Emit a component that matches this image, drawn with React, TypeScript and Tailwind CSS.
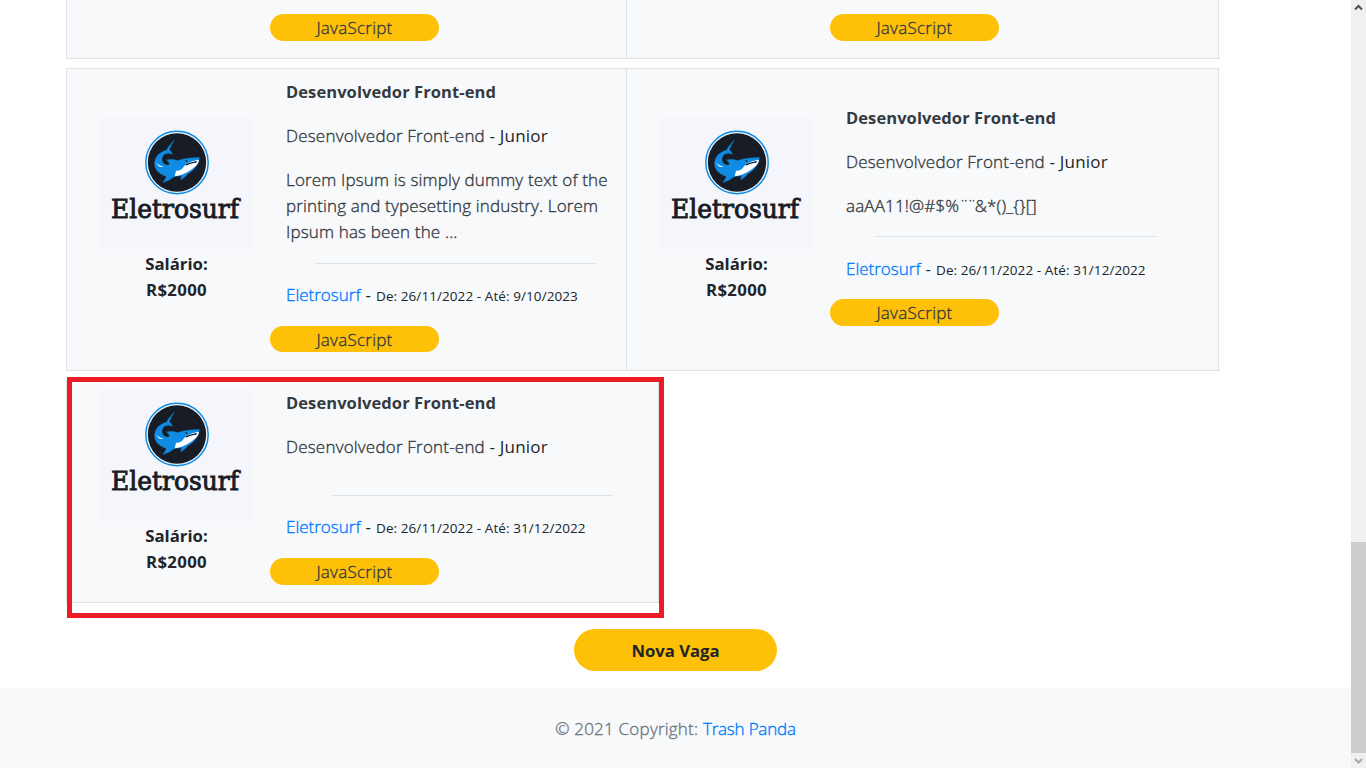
import React from "react";

function Logo() {
  return (
    <svg width="153" height="131" viewBox="0 0 153 131" className="block shrink-0 rounded bg-[#f5f6fc]" role="img" aria-label="Eletrosurf">
      <circle cx="77" cy="44.5" r="31.2" fill="#f5f6fc" stroke="#0e8ce4" strokeWidth="1.5" />
      <circle cx="77" cy="44.5" r="29.2" fill="#181c24" />
      <g transform="translate(43.7 11.7) scale(0.33333)">
        <path d="M91 32C84 42 72 52 70 61C50 66 36 78 33 98C31 118 45 133 68 140C67 147 62 153 57 158C70 154 82 149 93 140L113 138L112 150C120 146 127 138 131 133C150 122 164 108 167 84C145 83 122 86 101 93C90 88 78 89 69 91C74 95 77 99 78 105C64 110 52 98 55 84C58 74 70 66 86 74C84 68 80 64 77 60C79 50 86 42 91 32Z" fill="#0e8ce4" stroke="#0e8ce4" strokeWidth="1.5" />
        <path d="M93 140L97 123C105 124 112 121 117 115C124 104 142 93 166 90C165 97 162 104 155 110C140 125 118 137 93 140ZM36 97Q44 109 60 110Q46 117 36 97Z" fill="#fff" />
        <path d="M127 104Q143 96 160 94L158 99Q145 99 127 108ZM124 91l9 3-6 3z" fill="#181c24" />
      </g>
      <text x="11" y="100" fontFamily="DejaVu Serif" fontWeight="400" fontSize="26" fill="#181c24" stroke="#181c24" strokeWidth="0.9" textLength="128" lengthAdjust="spacingAndGlyphs">Eletrosurf</text>
    </svg>
  );
}

function Badge() {
  return (
    <span className="block h-[26.4px] w-[169px] rounded-full bg-[#ffc107] text-center font-light leading-[27px] tracking-[0.25px] text-[#343a40] [-webkit-text-stroke:0.35px]">
      JavaScript
    </span>
  );
}

type JobProps = { description?: React.ReactNode[]; until: string; className: string; rule: string };

function Job({ description = [], until, className, rule }: JobProps) {
  return (
    <article className={"flex items-center border-[#dee2e6] bg-[#f8f9fb] " + className}>
      <div className="mb-[19px] ml-[33px] flex w-[153px] shrink-0 flex-col items-center text-[16.8px] font-bold">
        <Logo />
        <p className="-mb-[0.6px] mt-[2.1px] text-center leading-[26px]">
          Salário:
          <br />
          <span className="tracking-[0.3px]">R$2000</span>
        </p>
      </div>
      <div className="ml-[17px] pb-[9px]">
        <div className="pl-4 pt-[0.6px]">
          <h2 className="mb-[17.6px] text-[16.5px] font-bold tracking-[0.08px] text-[#343a40]">Desenvolvedor Front-end</h2>
          <p className="mb-[17.6px] tracking-[0.2px]">
            <span className="font-light text-[#343a40] [-webkit-text-stroke:0.35px]">Desenvolvedor Front-end</span> - Junior
          </p>
          {description.length === 0 && <div className="h-[0.1px]" />}
          <div className="whitespace-nowrap font-light tracking-[0.16px] text-[#343a40] [-webkit-text-stroke:0.35px]">
            {description.map((line, i) => (
              <p key={i}>{line}</p>
            ))}
          </div>
          <hr className={"mb-[18.2px] mt-[17px] w-[281px] border-[#dee2e6] " + rule} />
          <p className="mb-[16.4px] whitespace-nowrap">
            <a className="font-light text-[#007bff] [-webkit-text-stroke:0.35px]">Eletrosurf</a>
            <span className="mx-[5px]">-</span>
            <small className="text-[13.5px] tracking-[0.08px]">De: 26/11/2022 - Até: {until}</small>
          </p>
        </div>
        <Badge />
      </div>
    </article>
  );
}

export default function App() {
  return (
    <div className="flex h-screen w-screen overflow-hidden bg-white font-['Open_Sans','Noto_Sans',sans-serif] text-[17px] leading-[26.4px] text-[#212529]">
      <div className="flex min-w-0 flex-1 flex-col">
        <main className="relative h-[688px] pl-[66px]">
          <div className="flex h-[59px] w-[1153px] border-x border-b border-[#dee2e6] bg-[#f8f9fb]">
            <div className="w-[559px] pl-[203px] pt-[14.3px]"><Badge /></div>
            <div className="flex-1 border-l border-[#dee2e6] pl-[203px] pt-[14.3px]"><Badge /></div>
          </div>
          <div className="mt-[9px] flex h-[303px] w-[1153px]">
            <Job className="w-[560px] border-y border-l" rule="ml-[29px]" until="9/10/2023" description={["Lorem Ipsum is simply dummy text of the", "printing and typesetting industry. Lorem", "Ipsum has been the ..."]} />
            <Job className="w-[593px] border" rule="ml-[29px]" until="31/12/2022" description={[<>aaAA11!@#$%<span className="tracking-[-2px]">¨¨</span>&amp;*()_{"{}"}[]</>]} />
          </div>
          <div className="mt-[9px] flex h-[223px]">
            <Job className="w-[593px] border" rule="ml-[46px]" until="31/12/2022" />
          </div>
          <div className="pointer-events-none absolute left-[67px] top-[377px] h-[241px] w-[597px] border-[5px] border-[#ed1c24]" />
          <div className="mt-[26px] flex w-[1219px] justify-center">
            <button className="h-[42px] w-[203px] rounded-full bg-[#ffc107] pt-[2px] text-[16.7px] font-bold">Nova Vaga</button>
          </div>
        </main>
        <footer className="flex h-[80px] items-center justify-center bg-[#f8f9fb] pt-[1.5px] font-light text-[#6c757d] [-webkit-text-stroke:0.35px]">
          <p><span className="tracking-[0.22px]">© 2021 Copyright: </span><a className="tracking-[-0.2px] text-[#007bff]">Trash Panda</a></p>
        </footer>
      </div>
      <aside className="flex w-[15px] shrink-0 flex-col items-center bg-[#f0f0f0]">
        <svg width="15" height="17" viewBox="0 0 15 17"><path d="M4 9.5L7.5 6L11 9.5" fill="none" stroke="#505050" strokeWidth="2" /></svg>
        <div className="mt-[525px] h-[211px] w-full bg-[#cdcdcd]" />
        <svg width="15" height="15" viewBox="0 0 15 15"><path d="M4 6L7.5 9.5L11 6" fill="none" stroke="#a8a8a8" strokeWidth="2" /></svg>
      </aside>
    </div>
  );
}
